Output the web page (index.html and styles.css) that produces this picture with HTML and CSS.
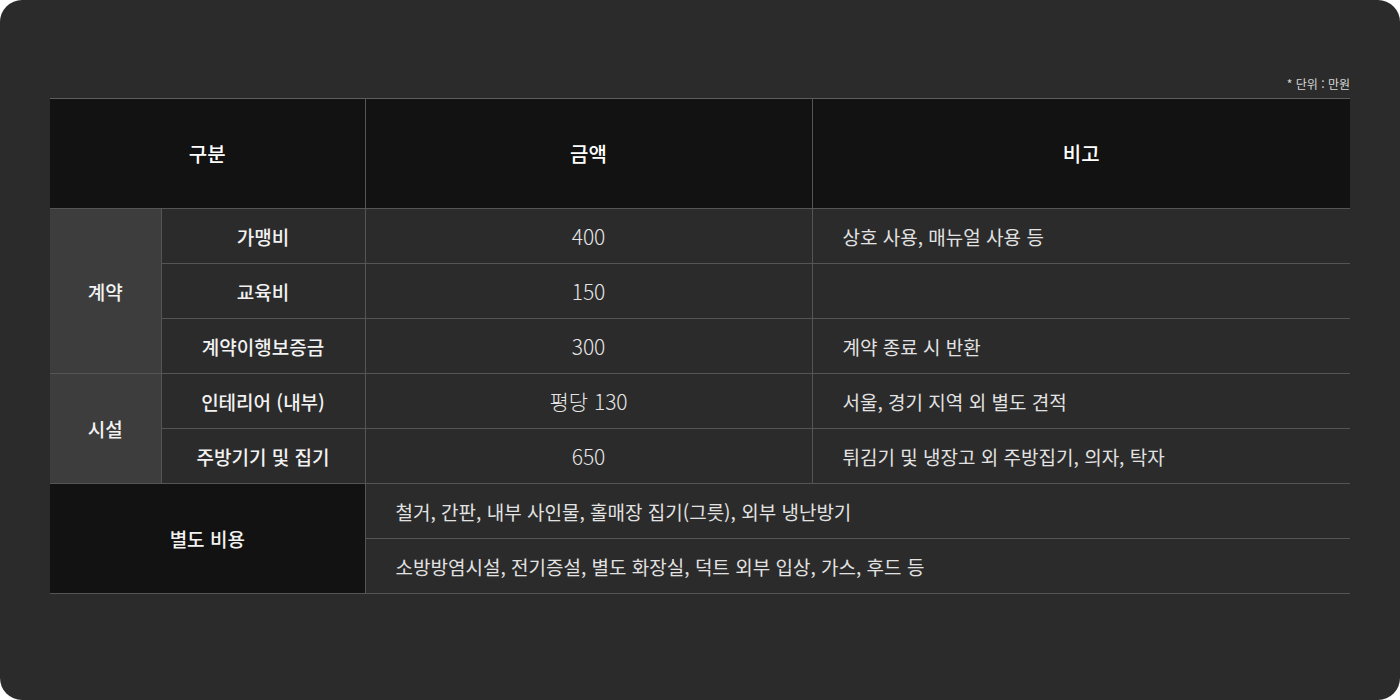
FILE: index.html
```html
<!DOCTYPE html>
<html lang="ko">
<head>
<meta charset="utf-8">
<link rel="stylesheet" href="styles.css">
</head>
<body>
<div class="card">
  <p class="unit">* 단위 : 만원</p>
  <table class="cost">
    <colgroup>
      <col class="c1"><col class="c2"><col class="c3"><col class="c4">
    </colgroup>
    <thead>
      <tr><th colspan="2" class="first">구분</th><th>금액</th><th>비고</th></tr>
    </thead>
    <tbody>
      <tr><td rowspan="3" class="group first">계약</td><td class="item">가맹비</td><td class="amt">400</td><td class="note">상호 사용, 매뉴얼 사용 등</td></tr>
      <tr><td class="item">교육비</td><td class="amt">150</td><td class="note"></td></tr>
      <tr><td class="item">계약이행보증금</td><td class="amt">300</td><td class="note">계약 종료 시 반환</td></tr>
      <tr><td rowspan="2" class="group first">시설</td><td class="item">인테리어 (내부)</td><td class="amt">평당 130</td><td class="note">서울, 경기 지역 외 별도 견적</td></tr>
      <tr><td class="item">주방기기 및 집기</td><td class="amt">650</td><td class="note">튀김기 및 냉장고 외 주방집기, 의자, 탁자</td></tr>
      <tr><td rowspan="2" colspan="2" class="extra first">별도 비용</td><td colspan="2" class="wide">철거, 간판, 내부 사인물, 홀매장 집기(그릇), 외부 냉난방기</td></tr>
      <tr><td colspan="2" class="wide">소방방염시설, 전기증설, 별도 화장실, 덕트 외부 입상, 가스, 후드 등</td></tr>
    </tbody>
  </table>
</div>
</body>
</html>
```
FILE: styles.css
```css
html, body {
  margin: 0;
  padding: 0;
  background: #ffffff;
}
body {
  font-family: "Noto Sans CJK KR", "Noto Sans", sans-serif;
}
.card {
  width: 1400px;
  height: 700px;
  box-sizing: border-box;
  background: #2b2b2b;
  border-radius: 22px;
  padding: 75px 50px 0;
  overflow: hidden;
}
.unit {
  margin: 0 0 5px;
  text-align: right;
  font-size: 12px;
  line-height: 18px;
  color: #d6d6d6;
}
.cost {
  width: 1300px;
  border-collapse: collapse;
  table-layout: fixed;
  border-top: 1px solid #5e5e5e;
}
.c1 { width: 111px; }
.c2 { width: 204px; }
.c3 { width: 447px; }
.c4 { width: 538px; }
.cost th, .cost td {
  padding: 0;
  border-bottom: 1px solid #555555;
  border-left: 1px solid #555555;
  text-align: center;
  vertical-align: middle;
}
.cost .first { border-left: none; }
.cost th {
  height: 109px;
  background: #121212;
  color: #ffffff;
  font-size: 20px;
  font-weight: 500;
}
.cost td {
  height: 54px;
  color: #eeeeee;
  font-size: 19px;
}
.cost .group {
  background: #3d3d3d;
  font-weight: 500;
  color: #f2f2f2;
}
.cost .item {
  font-weight: 500;
  color: #f2f2f2;
}
.cost .amt {
  font-size: 21px;
  color: #e6e6e6;
  font-weight: 300;
}
.cost .note {
  text-align: left;
  padding-left: 30px;
  color: #e2e2e2;
}
.cost .extra {
  background: #121212;
  font-weight: 500;
  color: #f2f2f2;
}
.cost .wide {
  text-align: left;
  padding-left: 30px;
  color: #e2e2e2;
}
```
